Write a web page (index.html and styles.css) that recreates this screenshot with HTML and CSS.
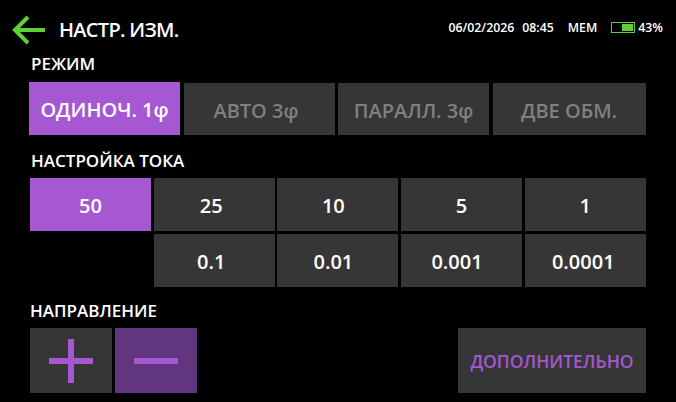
FILE: index.html
```html
<!DOCTYPE html>
<html>

<head>
    <meta charset="UTF-8">
    <title>Настр. изм.</title>
    <link rel="stylesheet" href="styles.css">
</head>

<body>
    <div class="top">
        <svg class="back" width="46" height="34" viewBox="0 0 46 34">
            <path d="M34 17H4M17 4L4 17L17 30" fill="none" stroke="#5fd035" stroke-width="4"/>
        </svg>
        <div class="title">НАСТР. ИЗМ.</div>
        <div class="status">
            <span class="date">06/02/2026</span>
            <span class="time">08:45</span>
            <span class="mem">MEM</span>
            <span class="batt"><i></i></span>
            <span>43%</span>
        </div>
    </div>

    <div class="label">РЕЖИМ</div>
    <div class="modes">
        <div class="btn on">ОДИНОЧ. 1φ</div>
        <div class="btn off auto">АВТО 3φ</div>
        <div class="btn off">ПАРАЛЛ. 3φ</div>
        <div class="btn off">ДВЕ ОБМ.</div>
    </div>

    <div class="label label2">НАСТРОЙКА ТОКА</div>
    <div class="steps">
        <div class="btn on">50</div>
        <div class="btn nudge6">25</div>
        <div class="btn nudge9">10</div>
        <div class="btn">5</div>
        <div class="btn">1</div>
        <div class="btn nudge6 s2">0.1</div>
        <div class="btn nudge9">0.01</div>
        <div class="btn nudge9">0.001</div>
        <div class="btn nudge4">0.0001</div>
    </div>

    <div class="label label3">НАПРАВЛЕНИЕ</div>
    <div class="dir">
        <div class="btn sign">
            <svg width="44" height="44" viewBox="0 0 44 44"><path d="M0 22H44M22 0V44" stroke="#a558d2" stroke-width="6"/></svg>
        </div>
        <div class="btn sign minus">
            <svg width="44" height="44" viewBox="0 0 44 44"><path d="M0 22H44" stroke="#a558d2" stroke-width="6"/></svg>
        </div>
        <div class="btn more">ДОПОЛНИТЕЛЬНО</div>
    </div>
</body>
</html>
```

FILE: styles.css
```css
* {
    margin: 0;
    padding: 0;
    box-sizing: border-box;
}

body {
    width: 676px;
    height: 402px;
    overflow: hidden;
    background: #000;
    color: #fff;
    font-family: "Open Sans", "Noto Sans", sans-serif;
    padding: 13px 30px 0 30px;
}

.top {
    display: flex;
    align-items: center;
    height: 34px;
    margin-left: -19px;
}

.back {
    margin-right: 2px;
}

.title {
    font-size: 20px;
    font-weight: 600;
    letter-spacing: -0.7px;
    margin-top: -2px;
}

.status {
    margin-left: auto;
    margin-right: -17px;
    display: flex;
    align-items: center;
    font-size: 12.3px;
    font-weight: 600;
    margin-top: -6px;
}

.time {
    margin-left: 8px;
}

.mem {
    margin-left: 14px;
}

.batt {
    width: 24px;
    height: 11px;
    margin: 0 3px 0 14px;
    border: 1px solid #5fd035;
    padding: 1px;
    display: flex;
    justify-content: flex-end;
}

.batt i {
    display: block;
    width: 11px;
    background: #5fd035;
}

.label {
    font-size: 17px;
    font-weight: 600;
    line-height: 20px;
    margin-top: 7px;
    margin-left: 1px;
}

.label2 {
    margin-top: 16px;
}

.label3 {
    margin-top: 14px;
    margin-left: 0;
}

.btn {
    display: flex;
    align-items: center;
    justify-content: center;
    background: #363636;
    font-size: 20px;
    font-weight: 600;
}

.on {
    background: #a558d2;
}

.off {
    color: #808080;
}

.modes {
    display: flex;
    gap: 3.5px;
    height: 53px;
    margin-top: 8px;
    margin-left: -1px;
}

.modes .btn {
    width: 151px;
    padding-top: 2px;
}

.modes .off:last-child {
    width: 153px;
}

.modes .off {
    margin-top: 1px;
}

.modes .auto {
    padding-right: 6px;
}

.steps {
    display: grid;
    grid-template-columns: repeat(5, 121px);
    grid-auto-rows: 53px;
    gap: 3px 2.7px;
    margin-top: 7px;
}

.steps .btn {
    padding-top: 1px;
}

.s2 {
    grid-column-start: 2;
}

.nudge4 {
    padding-right: 4px;
}

.nudge6 {
    padding-right: 6px;
}

.nudge9 {
    padding-right: 9px;
}

.dir {
    display: flex;
    gap: 3px;
    height: 65px;
    margin-top: 7px;
}

.sign {
    width: 82px;
}

.minus {
    background: #61367e;
}

.more {
    width: 188px;
    margin-left: auto;
    color: #a558d2;
    font-size: 17.5px;
}
```
